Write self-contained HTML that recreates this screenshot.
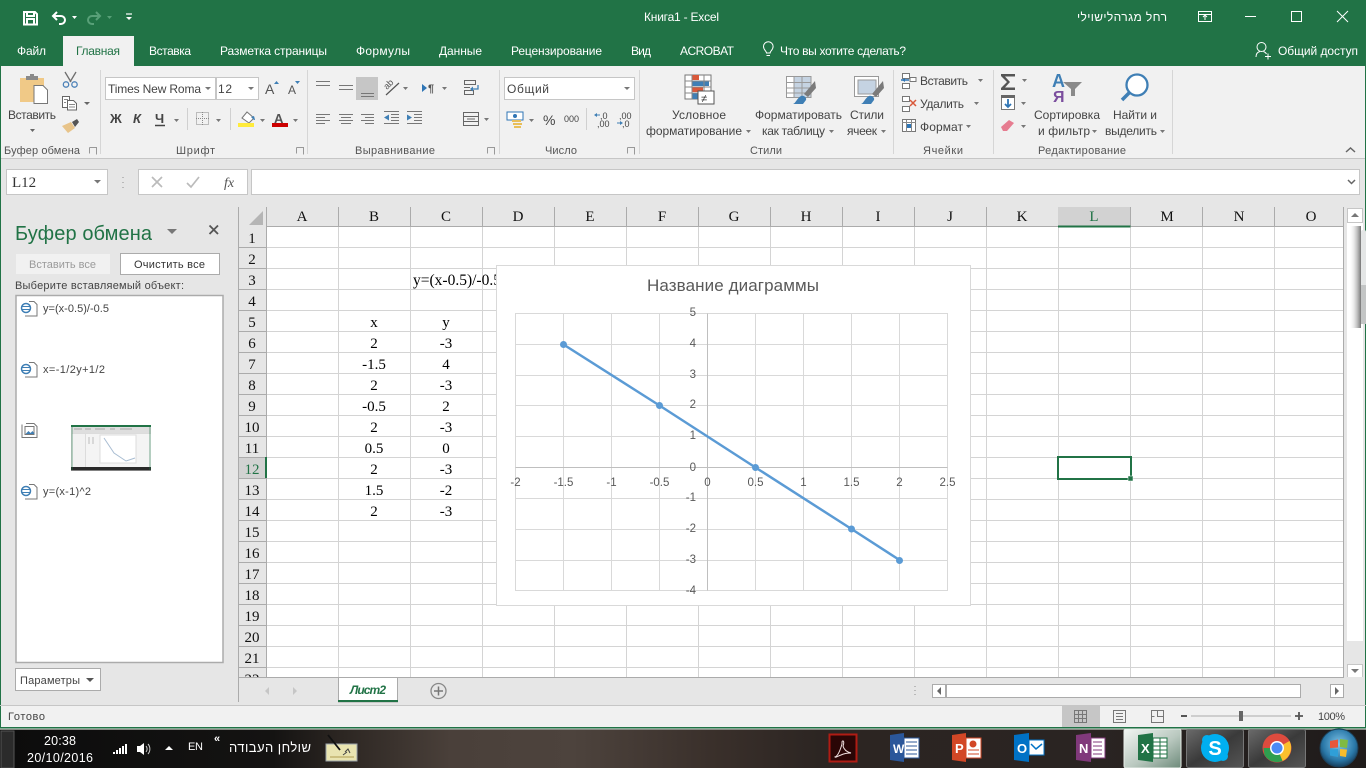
<!DOCTYPE html>
<html lang="ru"><head><meta charset="utf-8"><title>Книга1 - Excel</title>
<style>
html,body{margin:0;padding:0;width:1366px;height:768px;overflow:hidden;background:#e6e6e6}
svg{display:block;position:absolute;left:0;top:0}
text{font-family:"Liberation Sans","Noto Sans CJK SC",sans-serif;font-size:12px;fill:#444}
.w text,text.w{fill:#fff}
.s text{font-family:"Liberation Serif",serif;font-size:15px;fill:#000;text-anchor:middle}
.h text{font-family:"Liberation Serif",serif;font-size:15px;fill:#111;text-anchor:middle}
.m{text-anchor:middle}
.g text{font-size:11px;fill:#555}
.c text{font-size:11.5px;fill:#595959}
</style></head><body>
<svg width="1366" height="768" viewBox="0 0 1366 768" xmlns="http://www.w3.org/2000/svg">
<defs>
<linearGradient id="tb" x1="0" x2="1" y1="0" y2="0"><stop offset="0" stop-color="#0c0c0c"/><stop offset=".2" stop-color="#141312"/><stop offset=".25" stop-color="#2c2622"/><stop offset=".33" stop-color="#4a403a"/><stop offset=".42" stop-color="#4d433d"/><stop offset=".52" stop-color="#3a302b"/><stop offset=".6" stop-color="#2c2522"/><stop offset=".8" stop-color="#2a2422"/><stop offset="1" stop-color="#1f1b1a"/></linearGradient>
<linearGradient id="act" x1="0" x2="1" y1="0" y2="1"><stop offset="0" stop-color="#f2f6f3"/><stop offset=".55" stop-color="#b9c8bf"/><stop offset="1" stop-color="#6d8a7a"/></linearGradient>
<linearGradient id="btn" x1="0" x2="1" y1="0" y2="1"><stop offset="0" stop-color="#6a6a6a"/><stop offset=".5" stop-color="#3a3a3a"/><stop offset="1" stop-color="#555"/></linearGradient>
<linearGradient id="sh" x1="0" x2="1" y1="0" y2="0"><stop offset="0" stop-color="#fff" stop-opacity="0"/><stop offset="1" stop-color="#666" stop-opacity=".9"/></linearGradient>
<radialGradient id="orb" cx=".5" cy=".4" r=".6"><stop offset="0" stop-color="#7fc4e8"/><stop offset=".7" stop-color="#2a78a8"/><stop offset="1" stop-color="#173f5e"/></radialGradient>
<clipPath id="sheet"><rect x="238" y="207" width="1106" height="470"/></clipPath>
<clipPath id="c3"><rect x="411" y="269" width="85" height="20"/></clipPath>
</defs>

<!-- backgrounds -->
<rect width="1366" height="768" fill="#e6e6e6"/>
<rect width="1366" height="66" fill="#217346"/>
<rect y="66" width="1366" height="92" fill="#f1f1f1"/>
<rect y="158" width="1366" height="1" fill="#c6c6c6"/>
<rect x="0" y="36" width="1" height="692" fill="#217346"/><rect x="1365" y="36" width="1" height="692" fill="#217346"/>

<!-- title bar -->
<g fill="none" stroke="#fff">
<path stroke-width="2" d="M24 12h11l2 2v10.500H24zM27 12v4h7v-4M27 24v-5h7v5"/>
<path stroke-width="2" d="M57 12l-4 4 4 4M53 16h8a4 4 0 0 1 0 8h-2"/>
<path stroke="#58a078" stroke-width="2" d="M96 12l4 4-4 4M100 16h-8a4 4 0 0 0 0 8h2"/>
<path stroke-width="1.2" d="M126 14h6"/>
<rect x="1198.500" y="11.500" width="13" height="10"/><path d="M1198 14.500h14M1205 20v-4M1203 17l2-2 2 2"/>
<path d="M1245 16.500h11"/><rect x="1291.500" y="11.500" width="10" height="10"/><path d="M1337 11l11 11M1348 11l-11 11"/>
</g>
<g fill="#fff"><path d="M72 16h5l-2.500 3zM126 17h6l-3 3z"/></g>
<path d="M107 16h5l-2.500 3z" fill="#58a078"/>
<g class="w">
<text x="644" y="21" textLength="75">Книга1 - Excel</text>
<text x="1077" y="21" textLength="90">רחל מגרהלישוילי</text>
<text x="17" y="55" textLength="29">Файл</text>
<text x="149" y="55" textLength="42">Вставка</text>
<text x="220" y="55" textLength="107">Разметка страницы</text>
<text x="356" y="55" textLength="54">Формулы</text>
<text x="439" y="55" textLength="43">Данные</text>
<text x="511" y="55" textLength="91">Рецензирование</text>
<text x="631" y="55" textLength="20">Вид</text>
<text x="680" y="55" textLength="54">ACROBAT</text>
<text x="780" y="55" textLength="126">Что вы хотите сделать?</text>
<text x="1278" y="55" textLength="80">Общий доступ</text>
</g>
<rect x="63" y="36" width="71" height="30" fill="#f1f1f1"/>
<text x="76" y="55" textLength="44" style="fill:#217346">Главная</text>
<g fill="none" stroke="#fff"><path d="M766.500 53c0-2-3-3-3-6.500a4.800 4.800 0 0 1 9.600 0c0 3.500-3 4.500-3 6.500zM766.500 55.500h3.500"/>
<circle cx="1261.500" cy="47" r="4.500"/><path d="M1256 57c0-3 1.500-5 4-5.500M1263.500 51.500c1.500.5 2.500 1.500 3 2.500M1265 56.500h6M1268 53.500v6"/></g>

<!-- ribbon separators -->
<path d="M100.500 70v84M307.500 70v84M499.500 70v84M639.500 70v84M893.500 70v84M993.500 70v84M1172.500 70v84" stroke="#d6d6d6"/>

<!-- clipboard -->
<path d="M20 78h24v24H20z" fill="#f0c987"/><path d="M26 76h12v4H26z" fill="#8a8a8a"/><path d="M30 74h4v3h-4z" fill="#8a8a8a"/>
<path d="M34 85.500h9l4.500 4.500v13.500H34z" fill="#fff" stroke="#777"/>
<text x="8" y="119" textLength="48">Вставить</text><path d="M30 129h5l-2.500 3z" fill="#666"/>
<g fill="none" stroke="#6e6e6e" stroke-width="1.300"><path d="M65 72l6 10M76 72l-6 10"/></g>
<circle cx="66" cy="84.500" r="2.700" fill="none" stroke="#4d82b8" stroke-width="1.300"/><circle cx="74.500" cy="84.500" r="2.700" fill="none" stroke="#4d82b8" stroke-width="1.300"/>
<g fill="#fff" stroke="#666"><path d="M62.500 96.500h7v11h-7z"/><path d="M67.500 100.500h6l3 3v6.500h-9z"/></g>
<path d="M64 99.500h4M64 102.500h2M69 104.500h6M69 107h6" stroke="#888"/>
<path d="M84 102h6l-3 3z" fill="#666"/>
<path d="M62 126l9-4 4 6-7 5z" fill="#e8c48a"/><path d="M72 122l5-3 2 3-4 5z" fill="#555"/>

<!-- font group -->
<rect x="105.500" y="77.500" width="110" height="22" fill="#fff" stroke="#c6c6c6"/>
<rect x="216.500" y="77.500" width="42" height="22" fill="#fff" stroke="#c6c6c6"/>
<text x="108" y="93" textLength="93">Times New Roma</text><text x="218" y="93" textLength="14">12</text>
<path d="M205 87h6l-3 3zM248 87h6l-3 3z" fill="#777"/>
<text x="265" y="94" style="font-size:14px;fill:#555">A</text><path d="M274 84l2.500-3 2.500 3z" fill="#3f7fb5"/>
<text x="288" y="94" style="font-size:12px;fill:#555">A</text><path d="M295 81h5l-2.500 3z" fill="#3f7fb5"/>
<text x="110" y="123" style="font-size:13px;font-weight:bold;fill:#444">Ж</text>
<text x="133" y="123" style="font-size:13px;font-weight:bold;font-style:italic;fill:#444">К</text>
<text x="155" y="123" style="font-size:13px;font-weight:bold;fill:#444">Ч</text>
<path d="M155 125.500h10" stroke="#444" stroke-width="1.500"/><path d="M174 119h5l-2.500 3zM216 119h5l-2.500 3zM260 119h5l-2.500 3zM293 119h5l-2.500 3z" fill="#777"/>
<path d="M187.500 108v22M230.500 108v22" stroke="#d0d0d0"/>
<rect x="196.500" y="112.500" width="12" height="12" fill="none" stroke="#888" stroke-dasharray="1 1"/><path d="M202.500 112v13M196 118.500h13" stroke="#888" stroke-dasharray="1 1"/>
<path d="M242 118l5-6 7 6-5 5z" fill="#fff" stroke="#777"/><path d="M251 117l3-1 1 4-1 0z" fill="#3f7fb5"/><rect x="238" y="123" width="16" height="4" fill="#ffeb3b"/>
<text x="274" y="123" style="font-size:13px;font-weight:bold;fill:#555">A</text><rect x="272" y="123" width="16" height="4" fill="#c00"/>

<!-- alignment -->
<rect x="356" y="77" width="22" height="23" fill="#c6c6c6"/>
<g stroke="#777"><path d="M316 81.500h14M316 85.500h14M339 85.500h14M339 89.500h14M361 93.500h13M361 96.500h13"/>
<path d="M316 114.500h14M316 117.500h9M316 120.500h14M316 123.500h9M339 114.500h14M341 117.500h10M339 120.500h14M341 123.500h10M361 114.500h13M365 117.500h9M361 120.500h13M365 123.500h9"/>
<path d="M391 114.500h8M391 117.500h8M391 120.500h8M384 123.500h15M384 111.500h15M414 114.500h8M414 117.500h8M414 120.500h8M407 123.500h15M407 111.500h15"/></g>
<text transform="translate(387 90) rotate(-45)" style="font-size:9px;fill:#555">ab</text><path d="M386 95l13-12" stroke="#555" stroke-width="1.200"/>
<g fill="none" stroke="#666"><rect x="464.500" y="80.500" width="11" height="4"/><rect x="464.500" y="90.500" width="9" height="4"/><path d="M464 87.500h6"/>
<rect x="463.500" y="112.500" width="15" height="13"/><path d="M463 116.500h15M463 121.500h15M467 119h8"/></g>
<path d="M478 85v4h-6" fill="none" stroke="#3f7fb5" stroke-width="1.300"/><path d="M473 86.500l-3 2.500 3 2.500z" fill="#3f7fb5"/>
<path d="M384 117.500l5-3v6zM412 117.500l-5-3v6z" fill="#3f7fb5"/>
<path d="M403 87h5l-2.500 3zM442 87h5l-2.500 3zM484 118h5l-2.500 3z" fill="#777"/>
<path d="M422 84v8l5-4z" fill="#2f75b5"/><text x="428" y="92" style="font-size:11px;font-weight:bold;fill:#555">¶</text>

<!-- number -->
<rect x="504.500" y="77.500" width="130" height="22" fill="#fff" stroke="#c6c6c6"/>
<text x="507" y="93" textLength="42">Общий</text><path d="M624 87h6l-3 3z" fill="#777"/>
<rect x="507" y="112" width="16" height="8" fill="#fff" stroke="#2f75b5"/><circle cx="515" cy="116" r="2" fill="#2f75b5"/>
<g fill="#e8bf5a"><rect x="512" y="120" width="9" height="2"/><rect x="513" y="123" width="9" height="2"/><rect x="514" y="126" width="7" height="2"/></g>
<path d="M529 119h5l-2.500 3z" fill="#777"/>
<text x="543" y="125" style="font-size:14px;fill:#444">%</text><text x="564" y="122" style="font-size:9px;fill:#444">000</text>
<path d="M586.500 108v22" stroke="#d0d0d0"/>
<text x="600" y="119" style="font-size:9px;fill:#444">,0</text><text x="597" y="127" style="font-size:9px;fill:#444">,00</text>
<text x="619" y="119" style="font-size:9px;fill:#444">,00</text><text x="622" y="127" style="font-size:9px;fill:#444">,0</text>
<path d="M595 115h5M617 123h5" stroke="#3f7fb5"/><path d="M597 113l-3 2 3 2zM620 121l3 2-3 2z" fill="#3f7fb5"/>

<!-- styles big icons -->
<rect x="685" y="75" width="26" height="24" fill="#fff" stroke="#777"/><rect x="692" y="75" width="7" height="5" fill="#d9593b"/><rect x="692" y="81" width="17" height="5" fill="#3f7fb5"/><rect x="692" y="87" width="11" height="5" fill="#d9593b"/><rect x="692" y="93" width="6" height="6" fill="#3f7fb5"/>
<path d="M685 81h26M685 87h26M685 93h26M692 75v24M704 75v24" stroke="#888" fill="none"/>
<rect x="698" y="91" width="16" height="13" fill="#fff" stroke="#555"/><text x="701" y="102" style="font-size:11px;fill:#333">≠</text>
<g stroke="#999" fill="none"><rect x="786.500" y="76.500" width="24" height="21" fill="#fff"/><rect x="794" y="76.500" width="17" height="21" fill="#c5d3e2"/><path d="M786 82.500h25M786 88h25M786 93h25M794 76v22M802 76v22"/></g>
<g stroke="#999" fill="none"><rect x="854.500" y="76.500" width="24" height="20" fill="#fff"/><rect x="858" y="80" width="18" height="14" fill="#c5d3e2"/></g>
<path d="M804 94l11-13 1 7-8 9zM872 94l11-13 1 7-8 9z" fill="#7b7b7b"/>
<path d="M793 104c3-1 4-6 8-8 3-1 6 2 5 4l-3 4zM861 104c3-1 4-6 8-8 3-1 6 2 5 4l-3 4z" fill="#3f7fb5"/>
<g>
<text x="672" y="119" textLength="54">Условное</text>
<text x="646" y="135" textLength="96">форматирование</text>
<text x="755" y="119" textLength="87">Форматировать</text>
<text x="762" y="135" textLength="63">как таблицу</text>
<text x="850" y="119" textLength="34">Стили</text>
<text x="847" y="135" textLength="30">ячеек</text>
<text x="920" y="85" textLength="48">Вставить</text>
<text x="920" y="108" textLength="44">Удалить</text>
<text x="920" y="131" textLength="43">Формат</text>
<text x="1034" y="119" textLength="66">Сортировка</text>
<text x="1038" y="135" textLength="52">и фильтр</text>
<text x="1113" y="119" textLength="44">Найти и</text>
<text x="1105" y="135" textLength="52">выделить</text>
</g>
<path d="M746 130h5l-2.500 3zM829 130h5l-2.500 3zM881 130h5l-2.500 3zM978 79h5l-2.500 3zM974 102h5l-2.500 3zM966 125h5l-2.500 3zM1022 79h5l-2.500 3zM1021 102h5l-2.500 3zM1021 125h5l-2.500 3zM1092 130h5l-2.500 3zM1160 130h5l-2.500 3z" fill="#777"/>
<!-- cell icons -->
<g fill="#fff" stroke="#777"><path d="M902.500 73.500h7v5h-7zM902.500 83.500h7v5h-7zM910 77.500h6v4h-6zM902.500 96.500h7v5h-7zM902.500 106.500h7v5h-7zM902.500 119.500h13v12h-13z"/></g>
<path d="M901 80h8" stroke="#2f75b5" stroke-width="1.500"/><path d="M902 80l3-2v4z" fill="#2f75b5"/>
<path d="M910 100l6 6M916 100l-6 6" stroke="#d9593b" stroke-width="1.500"/>
<rect x="906" y="124" width="5" height="4" fill="#2f75b5"/><path d="M902 122.500h14M906.500 120v12M911.500 120v12" stroke="#888" fill="none"/>
<!-- editing icons -->
<path d="M1001 74h14v2.500h-10l5 5.500-5 5.500h10v2.500h-14v-2l6-6-6-6z" fill="#555"/>
<rect x="1001.500" y="96.500" width="13" height="13" fill="#fff" stroke="#777"/><rect x="1001" y="95" width="14" height="3" fill="#666"/><path d="M1008 99v8M1005 104l3 3 3-3" stroke="#2f75b5" stroke-width="1.800" fill="none"/>
<path d="M1001 127l8-7 5 3-7 8-4 0z" fill="#e67c90"/>
<text x="1052" y="87" style="font-size:18px;font-weight:bold;fill:#3f7fb5">A</text><text x="1053" y="102" style="font-size:16px;font-weight:bold;fill:#7b4e9e">Я</text>
<path d="M1063 82h19l-7 7v7h-4v-7z" fill="#8a8a8a"/>
<circle cx="1137" cy="85" r="10.500" fill="#fff" stroke="#3f7fb5" stroke-width="2.300"/><path d="M1129 93l-7 7" stroke="#3f7fb5" stroke-width="3.500"/>
<!-- group names -->
<g class="g">
<text x="4" y="154" textLength="76">Буфер обмена</text>
<text x="176" y="154" textLength="39">Шрифт</text>
<text x="355" y="154" textLength="80">Выравнивание</text>
<text x="545" y="154" textLength="32">Число</text>
<text x="750" y="154" textLength="32">Стили</text>
<text x="923" y="154" textLength="40">Ячейки</text>
<text x="1038" y="154" textLength="88">Редактирование</text>
</g>
<g fill="none" stroke="#999"><path d="M89.500 147.500h7v7M89.500 147.500v6M296.500 147.500h7v7M296.500 147.500v6M487.500 147.500h7v7M487.500 147.500v6M627.500 147.500h7v7M627.500 147.500v6"/><path d="M1346 152l4.500-4 4.500 4" stroke="#666" stroke-width="1.500"/></g>

<!-- formula bar -->
<rect x="6.500" y="169.500" width="101" height="25" fill="#fff" stroke="#c6c6c6"/>
<text x="12" y="187" style="font-family:'Liberation Serif',serif;font-size:15px;fill:#333">L12</text>
<path d="M94 180h7l-3.500 3.500z" fill="#777"/>
<path d="M123 177v1M123 182v1M123 187v1" stroke="#aaa" stroke-width="1.500"/>
<rect x="138.500" y="169.500" width="109" height="25" fill="#fff" stroke="#c6c6c6"/>
<rect x="251.500" y="169.500" width="1108" height="25" fill="#fff" stroke="#c6c6c6"/>
<path d="M152 177l10 10M162 177l-10 10" stroke="#bbb" stroke-width="1.700"/><path d="M187 183l4 4 8-10" stroke="#bbb" stroke-width="1.700" fill="none"/>
<text x="224" y="187" style="font-family:'Liberation Serif',serif;font-size:14px;font-style:italic;fill:#555">fx</text>
<path d="M1348 180l3.500 3.500 3.500-3.500" fill="none" stroke="#666" stroke-width="1.500"/>

<!-- task pane -->
<text x="15" y="240" textLength="137" style="font-size:20px;fill:#217346">Буфер обмена</text>
<path d="M167 229h10l-5 5z" fill="#777"/><path d="M209.500 225.500l8.500 8.500M218 225.500l-8.500 8.500" stroke="#555" stroke-width="1.800"/>
<rect x="16" y="254" width="94" height="20" fill="#f1f1f1"/>
<text x="29" y="268" textLength="67" style="font-size:11px;fill:#9a9a9a">Вставить все</text>
<rect x="120.500" y="253.500" width="99" height="21" fill="#fff" stroke="#ababab"/>
<text x="134" y="268" textLength="71" style="font-size:11px;fill:#333">Очистить все</text>
<text x="15" y="289" textLength="169" style="font-size:11px;fill:#444">Выберите вставляемый объект:</text>
<rect x="16" y="295.500" width="207" height="367" fill="#fff" stroke="#ababab" stroke-width="1.500"/>
<g fill="none" stroke="#777">
<path d="M29 301.500h5l3 3v11.500h-12M29 362.500h5l3 3v11.500h-12M29 484.500h5l3 3v11.500h-12M26 423.500h8l3 3v11H22v-13M25 426.500h9v8H25z"/>
</g>
<g fill="#fff" stroke="#3f7fb5" stroke-width="1.500"><circle cx="26" cy="308" r="4.500"/><circle cx="26" cy="369" r="4.500"/><circle cx="26" cy="491" r="4.500"/><path d="M22 306.500h8M22 309.500h8M22 367.500h8M22 370.500h8M22 489.500h8M22 492.500h8" stroke-width="1"/></g>
<path d="M25.500 434l3-3 2 2 2-2 2 3z" fill="#3f7fb5"/>
<text x="43" y="312" textLength="66" style="font-size:11px">y=(x-0.5)/-0.5</text>
<text x="43" y="373" textLength="62" style="font-size:11px">x=-1/2y+1/2</text>
<text x="43" y="495" textLength="48" style="font-size:11px">y=(x-1)^2</text>
<!-- thumbnail -->
<rect x="71" y="425" width="80" height="46" fill="#dcdcdc"/><rect x="71" y="425" width="80" height="2" fill="#217346"/><rect x="71" y="427" width="80" height="6" fill="#dedede"/><path d="M74 429h8M85 429h6M95 429h10M110 429h5M120 429h12" stroke="#a5a5a5"/><rect x="72" y="434" width="13" height="33" fill="#f2f2f2"/><rect x="86" y="434" width="65" height="33" fill="#f4f4f4"/><rect x="71" y="467" width="80" height="3.500" fill="#2a2a2a"/><path d="M72 426v44M150 426v44" stroke="#217346" stroke-width=".6"/><rect x="100" y="435" width="36" height="28" fill="#fff" stroke="#ddd"/><path d="M104 438l10 15 12 8 9-3" fill="none" stroke="#a9bdd2"/><path d="M89 437v7M93 437v7" stroke="#bbb"/>
<rect x="15.500" y="668.500" width="85" height="22" fill="#fff" stroke="#ababab"/>
<text x="20" y="684" textLength="60" style="font-size:11px">Параметры</text><path d="M86 678h8l-4 4z" fill="#555"/>

<!-- sheet -->
<rect x="238" y="207" width="1106" height="20" fill="#e6e6e6"/>
<rect x="238" y="226" width="29" height="451" fill="#e6e6e6"/>
<rect x="267" y="227" width="1077" height="450" fill="#fff"/>
<rect x="1058" y="207" width="73" height="19" fill="#d2d2d2"/><rect x="238" y="457" width="29" height="21" fill="#d2d2d2"/>
<path d="M263 211v14h-14z" fill="#b5b5b5"/>
<g clip-path="url(#sheet)" fill="none">
<path stroke="#d4d4d4" d="M338.500 227V677M410.500 227V677M482.500 227V677M554.500 227V677M626.500 227V677M698.500 227V677M770.500 227V677M842.500 227V677M914.500 227V677M986.500 227V677M1058.500 227V677M1130.500 227V677M1202.500 227V677M1274.500 227V677M267 247.500H1344M267 268.500H1344M267 289.500H1344M267 310.500H1344M267 331.500H1344M267 352.500H1344M267 373.500H1344M267 394.500H1344M267 415.500H1344M267 436.500H1344M267 457.500H1344M267 478.500H1344M267 499.500H1344M267 520.500H1344M267 541.500H1344M267 562.500H1344M267 583.500H1344M267 604.500H1344M267 625.500H1344M267 646.500H1344M267 667.500H1344"/>
<path stroke="#ababab" d="M238.500 207V677M266.500 207V677M338.500 207v19M410.500 207v19M482.500 207v19M554.500 207v19M626.500 207v19M698.500 207v19M770.500 207v19M842.500 207v19M914.500 207v19M986.500 207v19M1130.500 207v19M1202.500 207v19M1274.500 207v19M267 226.500H1344M238 247.500h28M238 268.500h28M238 289.500h28M238 310.500h28M238 331.500h28M238 352.500h28M238 373.500h28M238 394.500h28M238 415.500h28M238 436.500h28M238 457.500h28M238 478.500h28M238 499.500h28M238 520.500h28M238 541.500h28M238 562.500h28M238 583.500h28M238 604.500h28M238 625.500h28M238 646.500h28M238 667.500h28M1343.500 207V677"/>
<g class="h">
<text x="302" y="221">A</text><text x="374" y="221">B</text><text x="446" y="221">C</text><text x="518" y="221">D</text><text x="590" y="221">E</text><text x="662" y="221">F</text><text x="734" y="221">G</text><text x="806" y="221">H</text><text x="878" y="221">I</text><text x="950" y="221">J</text><text x="1022" y="221">K</text><text x="1094" y="221" style="fill:#217346">L</text><text x="1167" y="221">M</text><text x="1239" y="221">N</text><text x="1311" y="221">O</text>
<text x="252" y="243">1</text><text x="252" y="264">2</text><text x="252" y="285">3</text><text x="252" y="306">4</text><text x="252" y="327">5</text><text x="252" y="348">6</text><text x="252" y="369">7</text><text x="252" y="390">8</text><text x="252" y="411">9</text><text x="252" y="432">10</text><text x="252" y="453">11</text><text x="252" y="474" style="fill:#217346">12</text><text x="252" y="495">13</text><text x="252" y="516">14</text><text x="252" y="537">15</text><text x="252" y="558">16</text><text x="252" y="579">17</text><text x="252" y="600">18</text><text x="252" y="621">19</text><text x="252" y="642">20</text><text x="252" y="663">21</text><text x="252" y="684">22</text>
</g>
<g class="s">
<text x="374" y="327">x</text><text x="446" y="327">y</text>
<text x="374" y="348">2</text><text x="446" y="348">-3</text>
<text x="374" y="369">-1.5</text><text x="446" y="369">4</text>
<text x="374" y="390">2</text><text x="446" y="390">-3</text>
<text x="374" y="411">-0.5</text><text x="446" y="411">2</text>
<text x="374" y="432">2</text><text x="446" y="432">-3</text>
<text x="374" y="453">0.5</text><text x="446" y="453">0</text>
<text x="374" y="474">2</text><text x="446" y="474">-3</text>
<text x="374" y="495">1.5</text><text x="446" y="495">-2</text>
<text x="374" y="516">2</text><text x="446" y="516">-3</text>
</g>
</g>
<text x="413" y="285" clip-path="url(#c3)" style="font-family:'Liberation Serif',serif;font-size:15.500px;fill:#000">y=(x-0.5)/-0.5</text>
<!-- selection -->
<path d="M1058 226.500h72.500" stroke="#217346" stroke-width="2"/><path d="M266 457v21" stroke="#217346" stroke-width="2"/>
<rect x="1058" y="457" width="73" height="22" fill="none" stroke="#217346" stroke-width="2"/><rect x="1128" y="476" width="5" height="5" fill="#217346" stroke="#fff" stroke-width=".5"/>

<!-- chart -->
<rect x="496.500" y="265.500" width="474" height="340" fill="#fff" stroke="#d9d9d9"/>
<text x="733" y="291" class="m" textLength="172" style="font-size:17px;fill:#595959">Название диаграммы</text>
<path fill="none" stroke="#d9d9d9" d="M515.500 313.500H947.500V590.500H515.500ZM563.500 313.500V590.500M611.500 313.500V590.500M659.500 313.500V590.500M755.500 313.500V590.500M803.500 313.500V590.500M851.500 313.500V590.500M899.500 313.500V590.500M515.500 344.500H947.500M515.500 375.500H947.500M515.500 405.500H947.500M515.500 436.500H947.500M515.500 498.500H947.500M515.500 529.500H947.500M515.500 560.500H947.500"/>
<path fill="none" stroke="#bfbfbf" d="M707.500 313.500V590.500M515.500 467.500H947.500"/>
<polyline points="563.500,344.500 659.500,405.500 755.500,467.500 851.500,529 899.500,560" fill="none" stroke="#5b9bd5" stroke-width="2.500"/>
<g fill="#5b9bd5"><circle cx="563.500" cy="344.500" r="3.500"/><circle cx="659.500" cy="405.500" r="3.500"/><circle cx="755.500" cy="467.500" r="3.500"/><circle cx="851.500" cy="529" r="3.500"/><circle cx="899.500" cy="560.500" r="3.500"/></g>
<g class="c">
<g text-anchor="end"><text x="696" y="316">5</text><text x="696" y="347">4</text><text x="696" y="378">3</text><text x="696" y="408">2</text><text x="696" y="439">1</text><text x="696" y="471">0</text><text x="696" y="501">-1</text><text x="696" y="532">-2</text><text x="696" y="563">-3</text><text x="696" y="594">-4</text></g>
<g text-anchor="middle"><text x="515.500" y="486">-2</text><text x="563.500" y="486">-1.5</text><text x="611.500" y="486">-1</text><text x="659.500" y="486">-0.5</text><text x="707.500" y="486">0</text><text x="755.500" y="486">0.5</text><text x="803.500" y="486">1</text><text x="851.500" y="486">1.5</text><text x="899.500" y="486">2</text><text x="947.500" y="486">2.5</text></g>
</g>

<!-- vertical scrollbar -->
<rect x="1347" y="207" width="16" height="470" fill="#e6e6e6"/>
<rect x="1347" y="222" width="16" height="419" fill="#fff"/>
<rect x="1347.500" y="208.500" width="15" height="14" fill="#fff" stroke="#c6c6c6"/><path d="M1351 217l4-4 4 4z" fill="#777"/>
<rect x="1347.500" y="664.500" width="15" height="13" fill="#fff" stroke="#c6c6c6"/><path d="M1351 669h8l-4 4z" fill="#777"/>
<rect x="1349" y="226" width="12" height="102" fill="url(#sh)"/>
<rect x="1361" y="230" width="5" height="94" rx="2" fill="#e4e6e6"/><rect x="1361" y="285" width="5" height="39" fill="#c3c5c5"/>
<rect x="1365" y="36" width="1" height="194" fill="#217346"/><rect x="1365" y="324" width="1" height="404" fill="#217346"/>

<!-- sheet tabs -->
<rect x="238" y="677" width="1127" height="28" fill="#e6e6e6"/>
<path d="M238.500 677v25" stroke="#ababab"/><path d="M238 677.500h1106" stroke="#ababab"/>
<path d="M269 687v8l-4-4zM293 687v8l4-4z" fill="#c6c6c6"/>
<path d="M338.500 702V677.500h59V702z" fill="#fff" stroke="#ababab"/><rect x="338" y="700" width="60" height="2" fill="#217346"/>
<text x="350" y="694" textLength="36" style="font-weight:bold;font-style:italic;font-size:12px;fill:#217346">Лист2</text>
<circle cx="438.500" cy="691" r="7.500" fill="none" stroke="#888" stroke-width="1.300"/><path d="M434 691h9M438.500 686.500v9" stroke="#777" stroke-width="1.500"/>
<path d="M915 686v1M915 690v1M915 694v1" stroke="#aaa" stroke-width="1.500"/>
<rect x="932.500" y="684.500" width="13" height="13" fill="#fff" stroke="#ababab"/><path d="M941 687v8l-4-4z" fill="#666"/>
<rect x="946.500" y="684.500" width="354" height="13" fill="#fff" stroke="#ababab"/>
<rect x="1330.500" y="684.500" width="13" height="13" fill="#fff" stroke="#ababab"/><path d="M1335 687v8l4-4z" fill="#666"/>
<rect y="705" width="1366" height="1" fill="#c6c6c6"/>

<!-- status bar -->
<rect x="1" y="706" width="1364" height="21" fill="#f1f1f1"/>
<text x="8" y="720" textLength="37" style="font-size:11px">Готово</text>
<rect x="1062" y="706" width="38" height="21" fill="#c6c6c6"/>
<g fill="none" stroke="#777"><path d="M1074.500 710.500h12v12h-12zM1078.500 710.500v12M1082.500 710.500v12M1074.500 714.500h12M1074.500 718.500h12"/>
<path d="M1113.500 710.500h12v12h-12zM1116 713.500h7M1116 716.500h7M1116 719.500h7"/>
<path d="M1151.500 710.500h12v12h-12zM1157.500 710.500v6h6M1151.500 716.500h3"/>
<path d="M1191 716h100" stroke="#aaa"/></g>
<rect x="1181" y="715" width="6" height="2" fill="#555"/><rect x="1239" y="711" width="4" height="10" fill="#666"/>
<path d="M1295 716h8M1299 712v8" stroke="#555" stroke-width="1.800"/>
<text x="1318" y="720" textLength="27" style="font-size:11px">100%</text>
<rect y="727" width="1366" height="1.500" fill="#217346"/>

<!-- taskbar -->
<rect y="729" width="1366" height="39" fill="url(#tb)"/><rect y="729" width="1366" height="1" fill="#8a8a84"/>
<rect x="1" y="731" width="13" height="37" fill="#2b2b2b" stroke="#555"/>
<g class="w">
<text x="60" y="745" class="m" style="font-size:12.500px" textLength="32">20:38</text>
<text x="60" y="762" class="m" style="font-size:12.500px" textLength="66">20/10/2016</text>
<text x="188" y="750" textLength="15" style="font-size:11px">EN</text>
<text x="229" y="752" textLength="82" style="font-size:13px">שולחן העבודה</text>
<text x="214" y="742" style="font-size:11px;font-weight:bold">«</text>
</g>
<g fill="#fff"><rect x="113" y="752" width="2" height="2"/><rect x="116" y="750" width="2" height="4"/><rect x="119" y="748" width="2" height="6"/><rect x="122" y="746" width="2" height="8"/><rect x="125" y="744" width="2" height="10"/>
<path d="M137 746h3l4-3v12l-4-3h-3z"/><path d="M165 750l4-4 4 4z"/></g>
<path d="M146 746c1.500 2 1.500 4 0 6M148 744c2.500 3 2.500 7 0 10" stroke="#ccc" fill="none"/>
<!-- pen thumbnail -->
<rect x="326" y="744" width="31" height="17" fill="#e9e4b0" stroke="#9aa3ab"/><path d="M328 735l12 15" stroke="#111" stroke-width="1.800"/><path d="M330 757h24" stroke="#b09c50"/><path d="M345 752l3-3 2 4M343 755l4-3" stroke="#444" fill="none"/>
<!-- pinned app icons -->
<rect x="829.500" y="734.500" width="27" height="27" fill="#2a0606" stroke="#b01c14" stroke-width="2"/>
<path d="M835 757c3-1 5-6 7-13 0-3 0-3 1-3s1 3 0 5c1 4 4 6 8 7-3 0-6 0-10 2-3 1-5 3-6 2z" fill="none" stroke="#f0e0e0"/>
<path d="M890 735l14-2v29l-14-2z" fill="#2b579a"/><rect x="904" y="738" width="15" height="20" fill="#fff" stroke="#2b579a"/><path d="M906 742h11M906 746h11M906 750h11M906 754h11" stroke="#2b579a"/><text x="893" y="753" style="font-size:12px;font-weight:bold;fill:#fff">W</text>
<path d="M952 735l14-2v29l-14-2z" fill="#d24726"/><rect x="966" y="738" width="15" height="20" fill="#fff" stroke="#d24726"/><circle cx="973" cy="744" r="3.500" fill="#d24726"/><path d="M968 750h11M968 754h11" stroke="#d24726"/><text x="955" y="753" style="font-size:13px;font-weight:bold;fill:#fff">P</text>
<path d="M1014 735l15-2v29l-15-2z" fill="#0072c6"/><rect x="1029" y="740" width="15" height="15" fill="#fff" stroke="#0072c6"/><path d="M1031 744l5 5 6-5" stroke="#0072c6" stroke-width="1.500" fill="none"/><text x="1017" y="753" style="font-size:13px;font-weight:bold;fill:#fff">O</text>
<path d="M1076 735l15-2v29l-15-2z" fill="#80397b"/><rect x="1091" y="738" width="14" height="20" fill="#fff" stroke="#80397b"/><path d="M1093 742h9M1093 746h9M1093 750h9M1093 754h9" stroke="#80397b"/><text x="1079" y="753" style="font-size:13px;font-weight:bold;fill:#fff">N</text>
<rect x="1124" y="729" width="57" height="39" rx="2" fill="url(#act)" stroke="#e8eee9"/>
<path d="M1138 735l15-2v29l-15-2z" fill="#217346"/><rect x="1153" y="738" width="14" height="20" fill="#fff" stroke="#217346"/><path d="M1153 742h14M1153 746h14M1153 750h14M1153 754h14M1160 738v20" stroke="#217346"/><text x="1141" y="753" style="font-size:13px;font-weight:bold;fill:#fff">X</text>
<rect x="1186.500" y="729.500" width="57" height="38" rx="2" fill="url(#btn)" stroke="#777"/>
<rect x="1248.500" y="729.500" width="57" height="38" rx="2" fill="url(#btn)" stroke="#777"/>
<circle cx="1215" cy="748" r="14" fill="#00aff0"/><rect x="1202" y="735" width="10" height="10" rx="5" fill="#00aff0"/><rect x="1218" y="751" width="10" height="10" rx="5" fill="#00aff0"/>
<text x="1215" y="755" class="m" style="font-size:20px;font-weight:bold;fill:#fff">S</text>
<circle cx="1277" cy="748" r="14.500" fill="#dd4b3e"/><path d="M1277 748l12.500 -7a14.500 14.500 0 0 1-7 20z" fill="#fbc02d"/><path d="M1277 748l5.500 13a14.500 14.500 0 0 1-18-6l-1-7z" fill="#2e9e4f"/><circle cx="1277" cy="748" r="7" fill="#fff"/><circle cx="1277" cy="748" r="5.500" fill="#4a8af4"/>
<circle cx="1339" cy="748" r="19" fill="url(#orb)" stroke="#1c3f58"/>
<path d="M1330 741l8-1.500v8l-8 .5z" fill="#e8553a"/><path d="M1340 739l8 1-1 8-7-1z" fill="#7fbb42"/><path d="M1330 749.500l8-.5v8l-8-1.500z" fill="#2f9fd8"/><path d="M1340 749l7 .5-1 7.500-6-1z" fill="#f8bd2c"/>
</svg>
</body></html>
